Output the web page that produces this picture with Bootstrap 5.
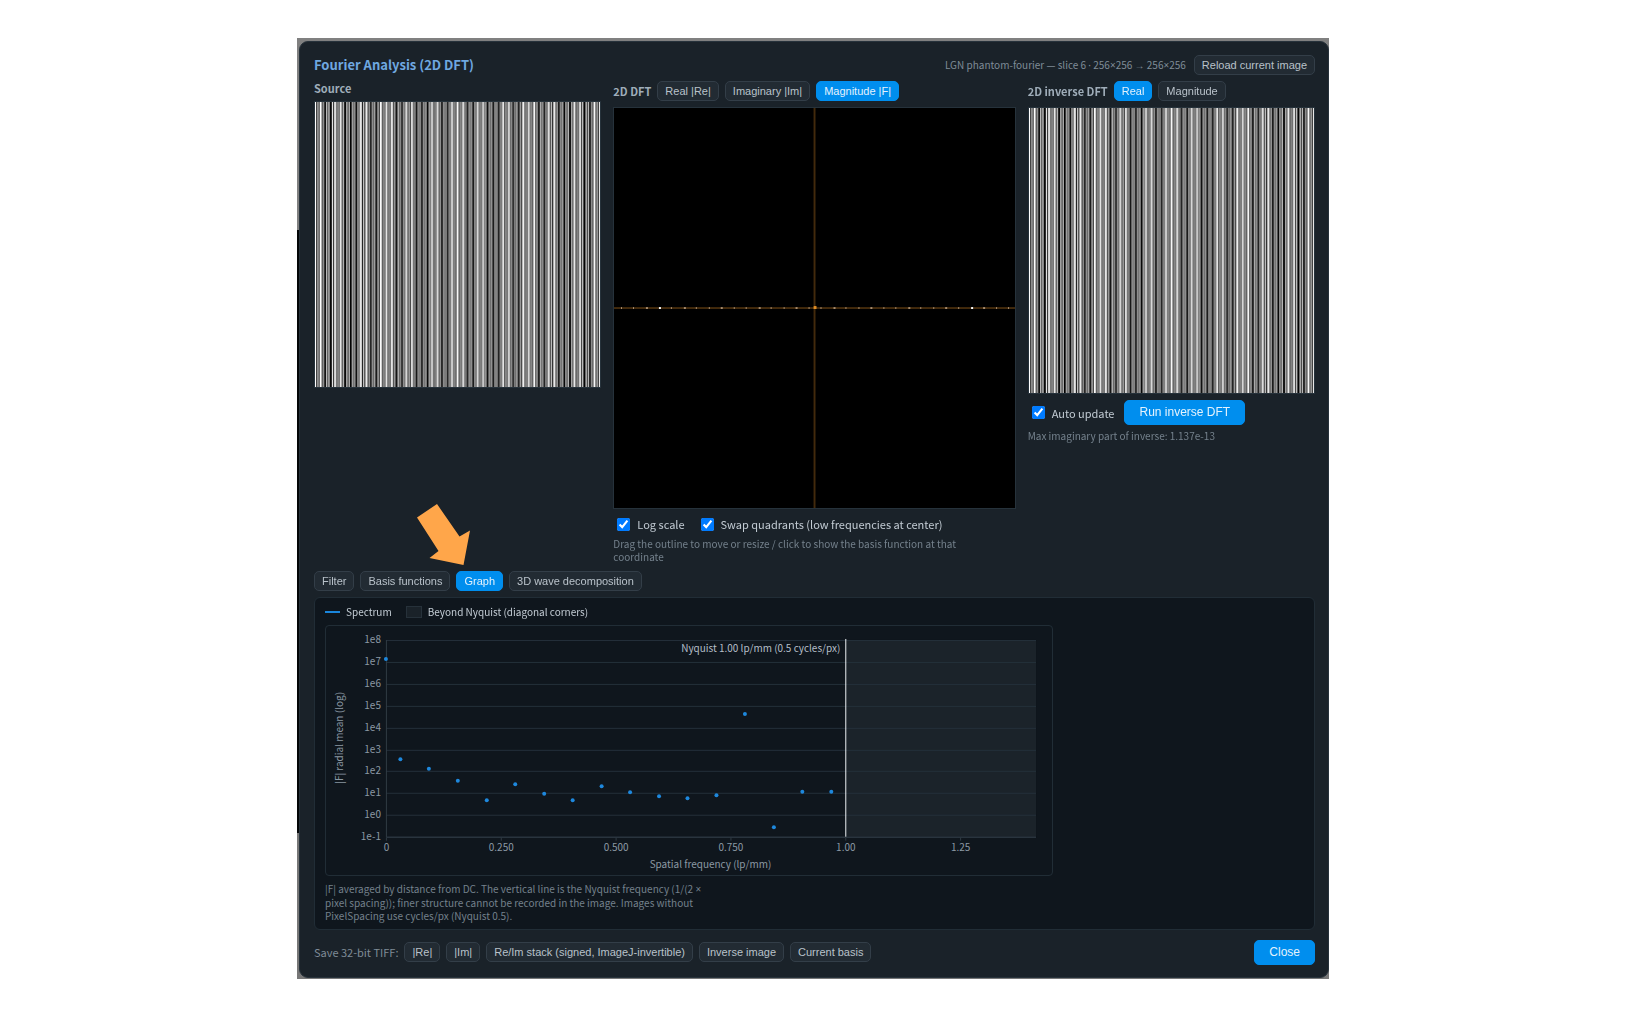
<!DOCTYPE html>
<html lang="en">
<head>
<meta charset="utf-8">
<meta name="viewport" content="width=device-width, initial-scale=1">
<title>Fourier Analysis (2D DFT)</title>
<link href="https://cdn.jsdelivr.net/npm/bootstrap@5.3.0/dist/css/bootstrap.min.css" rel="stylesheet">
<style>
body{background:#fff;font-family:"Noto Sans CJK SC","Noto Sans",sans-serif;font-size:11px;line-height:14px;color:#c3ccd4}
.stage{max-width:1032px;margin:38px auto 0 297px;padding:3px 0 1px 2px;background:linear-gradient(#808080 192px,#040608 192px,#040608 795px,#777 795px)}
.dialog{background:#1a2229;border:1px solid #27323b;border-radius:9px;padding:13px 13px 12px 14px}
.dialog h1{font-size:13px;line-height:20px;font-weight:700;color:#6fa8e0}
.dialog h2{font-size:11px;line-height:14px;font-weight:700;color:#9fadb9}
.dim{color:#7f8c97}
.meta{font-size:10px}
.sym{font-family:"Noto Sans",sans-serif}
.hint{font-size:10px;line-height:13px;color:#74818c;max-width:390px}
.panes{display:grid;grid-template-columns:1fr 1.4fr 1fr;gap:12px}
.panes canvas{display:block;width:100%;aspect-ratio:1;border:1px solid #26323b}
.dialog .btn{font-family:"Liberation Sans",Arial,sans-serif;--bs-btn-color:#b9c2ca;--bs-btn-bg:#222b33;--bs-btn-border-color:#333e48;--bs-btn-hover-bg:#2c3740;--bs-btn-hover-color:#fff;--bs-btn-padding-y:3px;--bs-btn-padding-x:7px;--bs-btn-border-radius:5px;--bs-btn-font-size:11px;--bs-btn-line-height:12px;white-space:nowrap}
.dialog .btn.active,.dialog .btn.main{--bs-btn-active-bg:#008eee;--bs-btn-active-color:#e4f2fd;--bs-btn-active-border-color:#008eee;--bs-btn-bg:#008eee;--bs-btn-color:#e4f2fd;--bs-btn-border-color:#008eee}
.dialog .btn.main{--bs-btn-font-size:12px;--bs-btn-line-height:13px;--bs-btn-padding-y:5px;--bs-btn-padding-x:14px}
.gap-6{gap:6px}
.below-6{margin-bottom:6px}
.above-6{margin-top:6px}
.tick{display:flex;align-items:center;gap:7px;margin-left:4px}
.tick input{width:13px;height:13px;margin:0;accent-color:#007bff}
.panel{background:#0f161d;border:1px solid #212d36;border-radius:6px;padding:7px 10px}
.legend-row{font-size:10px}
.key-line{width:15px;height:2px;background:#1a86dc}
.key-box{width:16px;height:12px;background:#1a2229;border:1px solid #26313a}
.chart{display:block;width:100%;max-width:728px;height:auto;border:1px solid #212d36;border-radius:4px}
.chart text{font-family:"Noto Sans CJK SC","Noto Sans",sans-serif;font-size:10px;fill:#8c99a4}
.pointer{position:absolute;left:103px;bottom:26px;width:53px;height:61px}
.actions{margin-top:10px}
</style>
</head>
<body>
<main class="stage">
<div class="dialog">
  <header class="d-flex align-items-center below-6">
    <h1 class="mb-0 me-auto">Fourier Analysis (2D DFT)</h1>
    <span class="dim meta me-2">LGN phantom-fourier — slice 6 <span class="sym">·</span> 256<span class="sym">×</span>256 <span class="sym">→</span> 256<span class="sym">×</span>256</span>
    <button class="btn" type="button">Reload current image</button>
  </header>

  <div class="panes mb-2">
    <section>
      <h2 class="below-6">Source</h2>
      <canvas class="bars" width="286" height="286"></canvas>
    </section>
    <section>
      <div class="d-flex align-items-center gap-6 below-6">
        <h2 class="mb-0">2D DFT</h2>
        <button class="btn" type="button">Real |Re|</button>
        <button class="btn" type="button">Imaginary |Im|</button>
        <button class="btn active" type="button">Magnitude |F|</button>
      </div>
      <canvas id="spectrum" width="402" height="402"></canvas>
      <div class="d-flex gap-3 mt-2 below-6">
        <label class="tick"><input type="checkbox" checked>Log scale</label>
        <label class="tick ms-0"><input type="checkbox" checked>Swap quadrants (low frequencies at center)</label>
      </div>
      <div class="hint">Drag the outline to move or resize / click to show the basis function at that coordinate</div>
    </section>
    <section>
      <div class="d-flex align-items-center gap-6 below-6">
        <h2 class="mb-0">2D inverse DFT</h2>
        <button class="btn active" type="button">Real</button>
        <button class="btn" type="button">Magnitude</button>
      </div>
      <canvas class="bars" width="286" height="286"></canvas>
      <div class="d-flex align-items-center gap-6 above-6 mb-1">
        <label class="tick me-1"><input type="checkbox" checked>Auto update</label>
        <button class="btn main" type="button">Run inverse DFT</button>
      </div>
      <div class="hint">Max imaginary part of inverse: 1.137e-13</div>
    </section>
  </div>

  <nav class="d-flex gap-6 position-relative below-6">
    <button class="btn" type="button">Filter</button>
    <button class="btn" type="button">Basis functions</button>
    <button class="btn active" type="button">Graph</button>
    <button class="btn" type="button">3D wave decomposition</button>
    <svg class="pointer" viewBox="0 0 53 61" aria-hidden="true"><path fill="#ffa64a" d="M0 13.5 20 0 42.500 32.500 53 26.500 46.500 61 12.500 54 21.500 47Z"/></svg>
  </nav>

  <section class="panel">
    <div class="legend-row d-flex align-items-center gap-6 below-6">
      <span class="key-line"></span><span>Spectrum</span>
      <span class="key-box ms-2"></span><span>Beyond Nyquist (diagonal corners)</span>
    </div>
    <svg class="chart" id="chart" viewBox="0 0 727 249" role="img" aria-label="Radial mean spectrum"></svg>
    <p class="hint above-6 mb-0">|F| averaged by distance from DC. The vertical line is the Nyquist frequency (1/(2 <span class="sym">×</span> pixel spacing)); finer structure cannot be recorded in the image. Images without PixelSpacing use cycles/px (Nyquist 0.5).</p>
  </section>

  <footer class="actions d-flex align-items-center gap-6">
    <span class="dim">Save 32-bit TIFF:</span>
    <button class="btn" type="button">|Re|</button>
    <button class="btn" type="button">|Im|</button>
    <button class="btn" type="button">Re/Im stack (signed, ImageJ-invertible)</button>
    <button class="btn" type="button">Inverse image</button>
    <button class="btn" type="button">Current basis</button>
    <button class="btn main ms-auto" type="button">Close</button>
  </footer>
</div>
</main>
<script src="https://cdn.jsdelivr.net/npm/bootstrap@5.3.0/dist/js/bootstrap.bundle.min.js"></script>
<script>
// Square wave of 100 cycles across 256 pixels, resampled to the pane
const strip = width => Object.assign(document.createElement('canvas'), {width, height: 1});
const wave = strip(256), wide = strip(304);
const w = wave.getContext('2d');
for (let x = 0; x < 256; x++) {
  const on = Math.cos(2 * Math.PI * 100 * (x + 0.5) / 256) >= 0;
  w.fillStyle = on ? '#fff' : '#000';
  w.fillRect(x, 0, 1, 1);
}
wide.getContext('2d').drawImage(wave, 0, 0, 304, 1);
document.querySelectorAll('.bars').forEach(c => {
  c.getContext('2d').drawImage(wide, 0, 0, 304, 1, 0, 0, 286, 286);
});

// Spectrum: axes through DC and a harmonic every eight bins
const s = document.getElementById('spectrum').getContext('2d');
s.fillStyle = '#000'; s.fillRect(0, 0, 402, 402);
s.fillStyle = '#432a0c'; s.fillRect(200, 0, 2, 402); s.fillRect(0, 200, 402, 2);
for (let k = -124; k < 128; k += 8) {
  const peak = k === -100 || k === 100;
  s.fillStyle = peak ? '#fff' : '#a88c6e';
  s.fillRect(Math.round(201 + k * 1.565), 200, peak || k % 3 === 0 ? 2 : 1, 2);
}
s.fillStyle = '#e08d24'; s.fillRect(200, 199, 3, 3);

// Radial mean chart
let out = '<rect x="521" y="14" width="190" height="197" fill="#1b232a"/>';
['1e8','1e7','1e6','1e5','1e4','1e3','1e2','1e1','1e0','1e-1'].forEach((t, i) => {
  const y = Math.round(14 + i * 21.9) + 0.5;
  out += `<path d="M60 ${y}H711" stroke="#24303a"/><text x="55" y="${y + 3}" text-anchor="end">${t}</text>`;
});
out += '<path d="M60.500 14V211.500H711" fill="none" stroke="#303b44"/>';
['0','0.250','0.500','0.750','1.00','1.25'].forEach((t, i) => {
  const x = Math.round(60 + i * 115) + 0.5;
  out += `<path d="M${x} 212v3" stroke="#303b44"/><text x="${x}" y="225" text-anchor="middle">${t}</text>`;
});
[[60,33],[74.5,133.5],[103,143],[132,155],[161,174.5],[189.5,158.5],[218.5,168],[247,174.5],[276,160.5],[304.5,166.500],[333.5,170.5],[362,172.5],[391,169.5],[419.5,88],[448.5,201.5],[477,166],[506,166]].forEach(p => {
  out += `<circle cx="${p[0]}" cy="${p[1]}" r="2" fill="#1e88dd"/>`;
});
out += '<path d="M520.5 13V211" stroke="#eef2f5"/>'
  + '<text x="515" y="26" text-anchor="end" style="fill:#b4bec7">Nyquist 1.00 lp/mm (0.5 cycles/px)</text>'
  + '<text x="385" y="242" text-anchor="middle">Spatial frequency (lp/mm)</text>'
  + '<text transform="translate(17 112) rotate(-90)" text-anchor="middle">|F| radial mean (log)</text>';
document.getElementById('chart').innerHTML = out;
</script>
</body>
</html>
